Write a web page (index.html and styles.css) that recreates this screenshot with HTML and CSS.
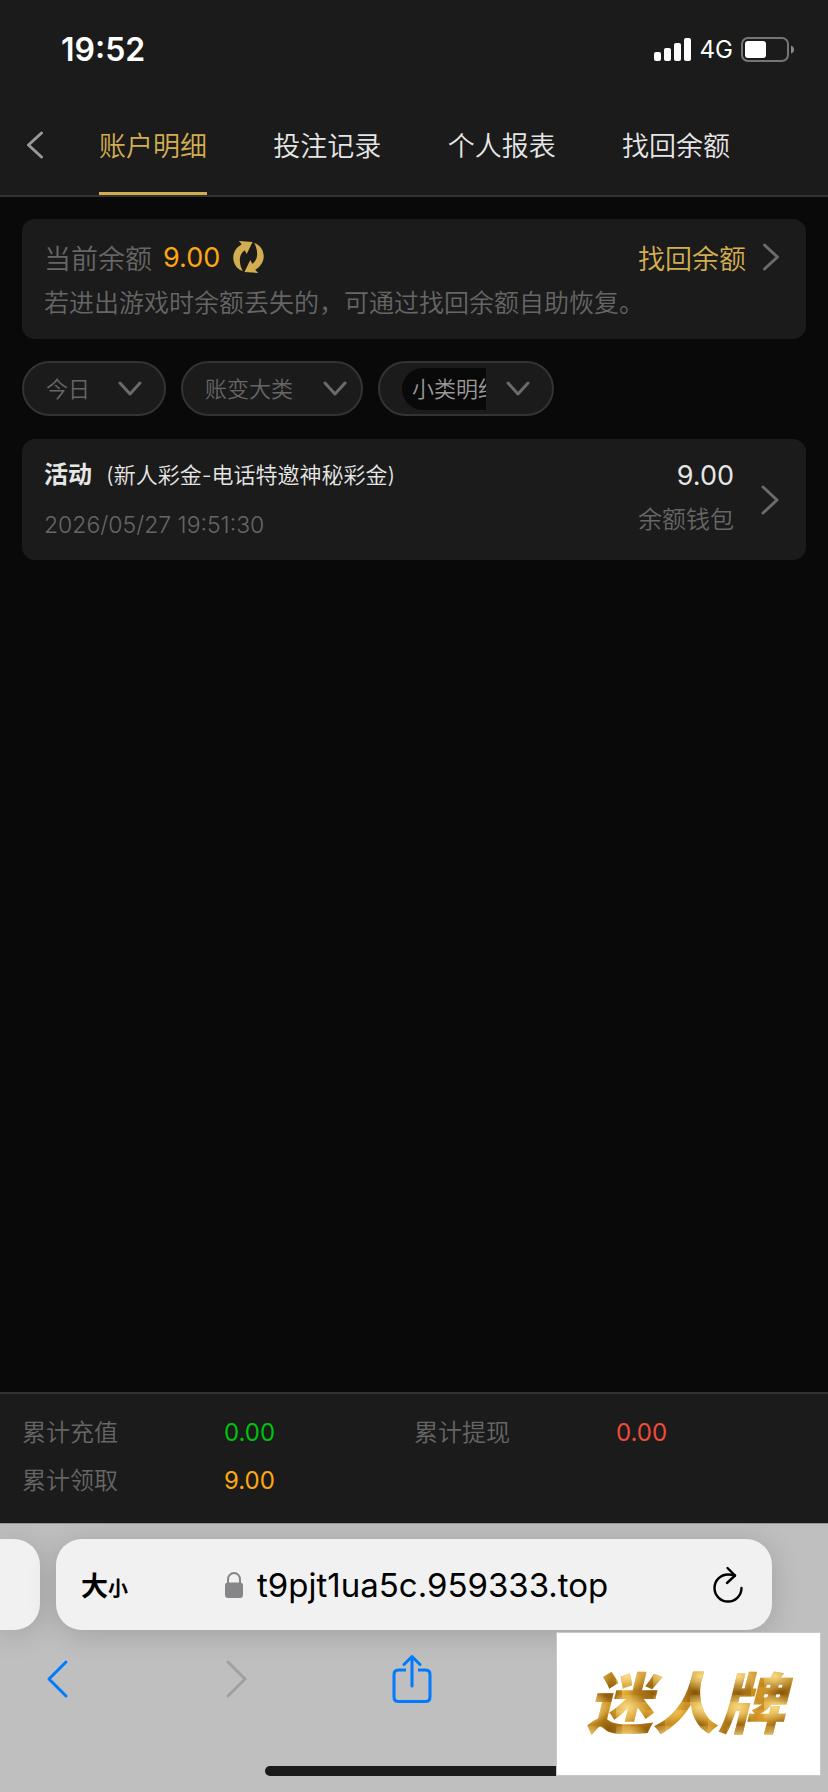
FILE: index.html
```html
<!DOCTYPE html>
<html lang="zh-CN">
  <head>
    <meta charset="UTF-8" />
    <meta name="viewport" content="width=device-width, initial-scale=1.0" />
    <title>账户明细</title>
    <link rel="stylesheet" href="styles.css">
  </head>
  <body>
    <header>
      <div class="status">
        <time>19:52</time>
        <div class="status-icons">
          <svg width="38" height="24" viewBox="0 0 38 24" fill="#fff">
            <rect x="0" y="14" width="7" height="9" rx="2" />
            <rect x="10" y="10" width="7" height="13" rx="2" />
            <rect x="20" y="5" width="7" height="18" rx="2" />
            <rect x="30" y="0" width="7" height="23" rx="2" />
          </svg>
          <span>4G</span>
          <svg width="54" height="26" viewBox="0 0 54 26">
            <rect x="1" y="1" width="46" height="23" rx="6" fill="none" stroke="#757575" stroke-width="2" />
            <rect x="4" y="4" width="21" height="17" rx="3" fill="#fff" />
            <path d="M50 8.500q3 1 3 4t-3 4z" fill="#8a8a8a" />
          </svg>
        </div>
      </div>
      <nav>
        <button class="back" aria-label="返回">
          <svg width="18" height="28" viewBox="0 0 18 28"><path d="M15.500 2L2.500 14l13 12" /></svg>
        </button>
        <div class="tabs">
          <a href="#" class="tab active">账户明细</a>
          <a href="#" class="tab">投注记录</a>
          <a href="#" class="tab">个人报表</a>
          <a href="#" class="tab">找回余额</a>
        </div>
      </nav>
    </header>

    <main>
      <section class="card balance">
        <div class="balance-row">
          <span class="label">当前余额</span>
          <span class="amount">9.00</span>
          <button class="refresh" aria-label="刷新">
            <svg width="33" height="34" viewBox="0 0 99 104" fill="#d3ae50">
              <path d="M20 3L62 6 44 43 38 31C17 45 21 75 32 95 -1 85-11 35 29 13z" />
              <path d="M20 3L62 6 44 43 38 31C17 45 21 75 32 95 -1 85-11 35 29 13z" transform="rotate(180 49.500 52)" />
            </svg>
          </button>
          <a href="#" class="recover">
            找回余额
            <svg width="18" height="28" viewBox="0 0 18 28"><path d="M2.500 2l13 12-13 12" /></svg>
          </a>
        </div>
        <p>若进出游戏时余额丢失的，可通过找回余额自助恢复。</p>
      </section>

      <div class="filters">
        <label class="pill">
          <select class="day" aria-label="日期">
            <option>今日</option>
          </select>
          <svg width="24" height="16" viewBox="0 0 24 16"><path d="M2 2l10 11L22 2" /></svg>
        </label>
        <label class="pill wide">
          <select class="kind" aria-label="账变大类">
            <option>账变大类</option>
          </select>
          <svg width="24" height="16" viewBox="0 0 24 16"><path d="M2 2l10 11L22 2" /></svg>
        </label>
        <label class="pill">
          <select class="detail" aria-label="小类明细">
            <option>小类明细</option>
          </select>
          <svg width="24" height="16" viewBox="0 0 24 16"><path d="M2 2l10 11L22 2" /></svg>
        </label>
      </div>

      <a href="#" class="card record">
        <div class="record-info">
          <div class="record-title"><b>活动</b><span>(新人彩金-电话特邀神秘彩金)</span></div>
          <time>2026/05/27 19:51:30</time>
        </div>
        <div class="record-sum">
          <span class="sum">9.00</span>
          <span class="wallet">余额钱包</span>
        </div>
        <svg width="20" height="30" viewBox="0 0 20 30"><path d="M3 2l14 13L3 28" /></svg>
      </a>
    </main>

    <dl class="totals">
      <div><dt>累计充值</dt><dd class="green">0.00</dd></div>
      <div><dt>累计提现</dt><dd class="red">0.00</dd></div>
      <div><dt>累计领取</dt><dd class="orange">9.00</dd></div>
    </dl>

    <footer>
      <div class="browser-tabs">
        <div class="prev-tab"></div>
        <div class="address">
          <button class="text-size" aria-label="大小">大<small>小</small></button>
          <label class="url">
            <svg width="18" height="26" viewBox="0 0 18 26">
              <path d="M3 12V7.500a6 6.500 0 0 1 12 0V12" fill="none" stroke="#86858a" stroke-width="2" />
              <rect x="0" y="10.500" width="18" height="15.500" rx="3" fill="#86858a" />
            </svg>
            <input type="text" value="t9pjt1ua5c.959333.top" aria-label="网址" />
          </label>
          <button class="reload" aria-label="重新加载">
            <svg width="32" height="38" viewBox="0 0 32 38" fill="none" stroke="#000" stroke-width="2.400" stroke-linecap="round" stroke-linejoin="round">
              <path d="M29.500 22A13.500 13.500 0 1 1 16 8.500q4 0 7 1" />
              <path d="M15.500 2l7.500 7.500-8 7.500" />
            </svg>
          </button>
        </div>
      </div>
      <div class="toolbar">
        <button aria-label="后退">
          <svg width="24" height="40" viewBox="0 0 24 40" stroke="#007aff"><path d="M21 3L4 20l17 17" /></svg>
        </button>
        <button aria-label="前进">
          <svg width="24" height="40" viewBox="0 0 24 40" stroke="#a0a0a0"><path d="M5 3l17 17L5 37" /></svg>
        </button>
        <button aria-label="分享">
          <svg width="40" height="50" viewBox="0 0 40 50" stroke="#007aff">
            <path d="M14 16H6.500Q2 16 2 20.500V43q0 4.500 4.500 4.500h27q4.500 0 4.500-4.500V20.500Q38 16 33.500 16H26" stroke-linecap="butt" />
            <path d="M20 32V3M12 10.500L20 2.500l8 8" />
          </svg>
        </button>
      </div>
      <div class="home-bar"></div>
      <div class="brand"><span>迷人牌</span></div>
    </footer>
  </body>
</html>
```

FILE: styles.css
```css
* {
  box-sizing: border-box;
}
body {
  margin: 0;
  min-height: 100vh;
  display: flex;
  flex-direction: column;
  background-color: #090909;
  color: #e6e6e6;
  font-family: Inter, "Noto Sans CJK SC", sans-serif;
  font-weight: 350;
  font-size: 24px;
}
a {
  color: inherit;
  text-decoration: none;
}
button {
  padding: 0;
  border: 0;
  background: none;
  font-family: inherit;
}
svg {
  display: block;
  flex-shrink: 0;
}
nav svg,
main svg {
  stroke-linecap: round;
  stroke-linejoin: round;
}
header {
  background-color: #1b1b1b;
  border-bottom: 2px solid #333;
}
.status {
  height: 99px;
  padding: 0 33px 0 61px;
  display: flex;
  align-items: center;
  justify-content: space-between;
}
.status time {
  color: #fff;
  font-size: 32px;
  font-weight: 600;
}
.status-icons {
  display: flex;
  align-items: center;
  gap: 8px;
  color: #fff;
  font-size: 24px;
  font-weight: 400;
}
nav {
  display: flex;
  height: 96px;
  padding-left: 26px;
}
nav path,
.recover path,
.pill path,
.record path {
  fill: none;
  stroke: #6b6b6b;
  stroke-width: 3;
}
nav path {
  stroke: #999;
}
.back {
  padding-bottom: 4px;
}
.tabs {
  flex: 1;
  display: flex;
  justify-content: space-between;
  padding: 0 98px 0 55px;
}
.tab {
  padding-top: 28px;
  font-size: 27px;
  line-height: 40px;
  border-bottom: 3px solid transparent;
}
.tab.active {
  color: #d3ae50;
  border-bottom-color: #d3ae50;
}
main {
  flex: 1;
  padding: 22px;
}
.card {
  background-color: #1b1b1b;
  border-radius: 13px;
}
.balance {
  height: 120px;
  padding: 18px 26px 0 22px;
}
.balance-row {
  display: flex;
  align-items: center;
  height: 40px;
  font-size: 27px;
}
.label,
.balance p {
  color: #666;
}
.amount {
  margin: 0 12px 0 11px;
  color: #ffa70f;
  font-weight: 400;
}
.recover {
  margin-left: auto;
  display: flex;
  align-items: center;
  gap: 16px;
  color: #d3ae50;
}
.balance p {
  margin: 8px 0 0;
  font-size: 25px;
  line-height: 36px;
}
.filters {
  display: flex;
  gap: 15px;
  margin: 22px 0 23px;
}
.pill {
  display: flex;
  align-items: center;
  height: 55px;
  padding: 0 22px;
  border: 2px solid #333;
  border-radius: 28px;
  background-color: #1b1b1b;
}
.pill.wide {
  padding-right: 14px;
}
.pill select {
  appearance: none;
  height: 42px;
  padding: 0;
  border: 0;
  background: none;
  color: #666;
  font-family: inherit;
  font-size: 22px;
  font-weight: 350;
}
.pill .day {
  width: 72px;
}
.pill .kind {
  width: 118px;
}
.pill .detail {
  width: 84px;
  margin-right: 20px;
  padding-left: 10px;
  border-radius: 21px 0 0 21px;
  background-color: #090909;
  color: #999;
}
.record {
  display: flex;
  align-items: center;
  height: 121px;
  padding: 0 26px 0 22px;
}
.record-info {
  flex: 1;
}
.record-title {
  display: flex;
  align-items: center;
  gap: 14px;
  height: 48px;
  padding-top: 2px;
  font-size: 22px;
}
.record-title b {
  font-size: 24px;
  font-weight: 700;
}
.record time {
  display: block;
  padding-top: 2px;
  line-height: 54px;
  font-size: 23px;
  color: #666;
}
.record-sum {
  margin-right: 26px;
  padding-bottom: 3px;
  display: flex;
  flex-direction: column;
  text-align: right;
  line-height: 44px;
}
.sum {
  font-size: 27px;
  font-weight: 400;
}
.wallet {
  color: #666;
}
.totals {
  margin: 0;
  padding: 15px 22px 18px;
  display: grid;
  grid-template-columns: 1fr 1fr;
  border-top: 2px solid #333;
  background-color: #1b1b1b;
  line-height: 48px;
}
.totals div {
  display: flex;
}
dt {
  width: 202px;
  color: #666;
}
dd {
  margin: 0;
  font-weight: 400;
}
.green {
  color: #00c20a;
}
.red {
  color: #f04b3a;
}
.orange {
  color: #ffa70f;
}
footer {
  position: relative;
  height: 269px;
  border-top: 1px solid #969696;
  background-color: #bfbfbf;
  overflow: hidden;
}
.browser-tabs {
  display: flex;
  gap: 16px;
  padding: 15px 56px 0 0;
}
.prev-tab,
.address {
  height: 91px;
  background-color: #f1f1f1;
  box-shadow: 0 4px 30px rgba(0, 0, 0, 0.16);
}
.prev-tab {
  flex: 0 0 40px;
  border-radius: 0 26px 26px 0;
}
.address {
  flex: 1;
  min-width: 0;
  display: flex;
  align-items: center;
  padding: 0 28px 0 25px;
  border-radius: 26px;
}
.text-size {
  color: #000;
  font-size: 27px;
  font-weight: 700;
  white-space: nowrap;
}
.text-size small {
  font-size: 20px;
}
.url {
  flex: 1;
  min-width: 0;
  display: flex;
  align-items: center;
  gap: 14px;
  margin-left: 97px;
}
.url input {
  flex: 1;
  min-width: 0;
  padding: 0;
  border: 0;
  background: none;
  color: #000;
  font-family: inherit;
  font-size: 33px;
}
.toolbar {
  display: grid;
  grid-template-columns: repeat(5, 60px);
  justify-content: space-between;
  align-items: center;
  height: 98px;
  padding: 0 31px 0 27px;
}
.toolbar svg {
  margin: auto;
  fill: none;
  stroke-width: 3;
  stroke-linecap: round;
  stroke-linejoin: round;
}
.home-bar {
  width: 36%;
  height: 10px;
  margin: 38px auto 0;
  border-radius: 5px;
  background-color: #1b1b1b;
}
/* logo sits on top of the toolbar */
.brand {
  position: absolute;
  right: 7px;
  bottom: 16px;
  width: 265px;
  height: 144px;
  display: flex;
  align-items: center;
  justify-content: center;
  border: 1px solid #c8c8c8;
  background-color: #fff;
}
.brand span {
  padding: 0 14px 0 8px;
  font-size: 66px;
  font-weight: 900;
  font-style: italic;
  line-height: 80px;
  color: transparent;
  background-color: #c98f22;
  background-image:
    radial-gradient(ellipse at 30% 40%, rgba(255, 226, 140, 0.9), transparent 60%),
    radial-gradient(ellipse at 70% 75%, rgba(120, 72, 4, 0.8), transparent 55%),
    radial-gradient(ellipse at 50% 20%, rgba(240, 180, 60, 0.9), transparent 60%);
  background-size: 37px 31px, 43px 38px, 29px 23px;
  background-clip: text;
  -webkit-background-clip: text;
}
```
